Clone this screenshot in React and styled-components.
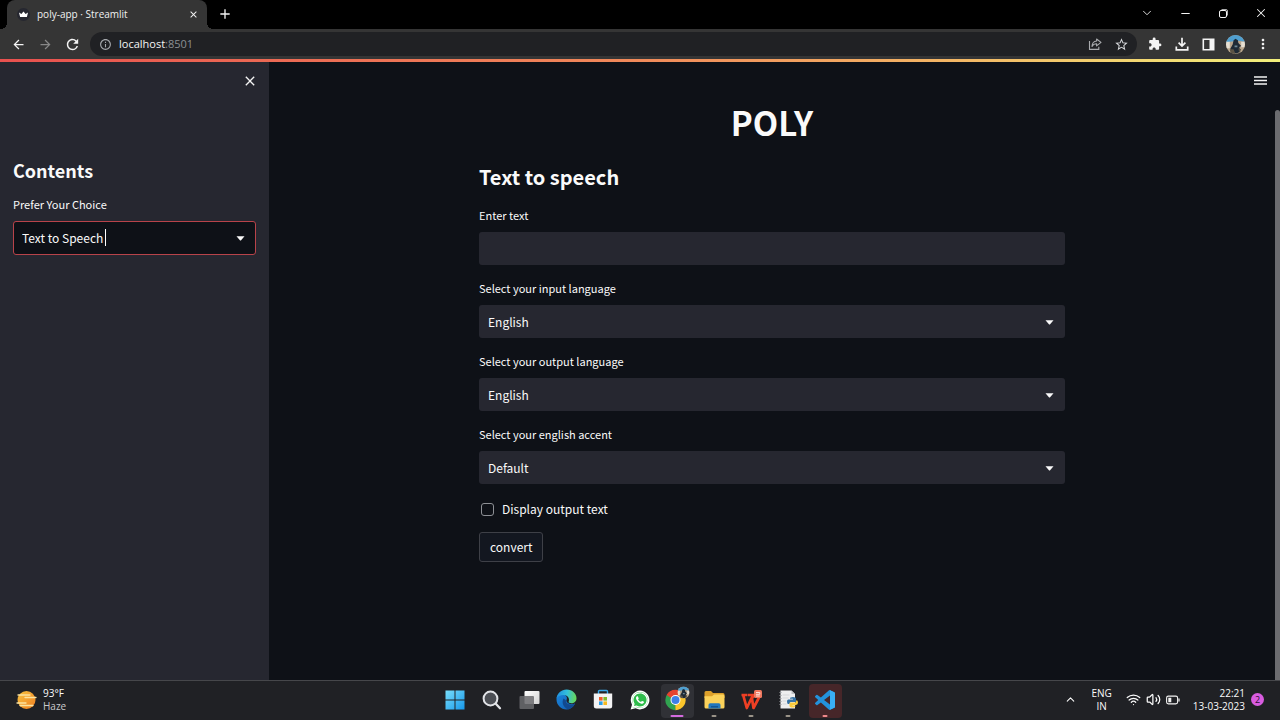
import React from "react";
import styled, { createGlobalStyle } from "styled-components";
import {
  MdArrowBack,
  MdArrowForward,
  MdRefresh,
  MdStarOutline,
  MdExtension,
  MdMoreVert,
  MdClose,
  MdAdd,
  MdInfoOutline,
} from "react-icons/md";
import { FaWhatsapp } from "react-icons/fa6";
import { ChevronDown, ChevronUp, Minus, X, Wifi, Volume2 } from "lucide-react";

const Global = createGlobalStyle`
  *, *::before, *::after { box-sizing: border-box; }
  body { margin: 0; background: #0e1117; color: #fafafa; }
  button, input, select { font: inherit; color: inherit; }
  h1, h2, p { margin: 0; }
`;

const uiFont = `"Open Sans", "Noto Sans", sans-serif`;
const pageFont = `"Noto Sans CJK JP", "Noto Sans", sans-serif`;

const Screen = styled.div`
  min-height: 100vh;
  display: flex;
  flex-direction: column;
`;

/* Browser chrome */

const TabStrip = styled.div`
  display: flex;
  height: 29px;
  padding-left: 7px;
  background: #000;
  font: 10px/14px ${uiFont};
`;

const Tab = styled.div`
  position: relative;
  display: flex;
  align-items: center;
  gap: 7px;
  width: 200px;
  padding: 0 8px 1px 10px;
  border-radius: 8px 8px 0 0;
  background: #353535;
  &::before,
  &::after {
    content: "";
    position: absolute;
    bottom: 0;
    width: 6px;
    height: 6px;
  }
  &::before {
    right: 100%;
    background: radial-gradient(circle at 0 0, #000 6px, #353535 6px);
  }
  &::after {
    left: 100%;
    background: radial-gradient(circle at 100% 0, #000 6px, #353535 6px);
  }
`;

const TabTitle = styled.span`
  flex: 1;
  color: #f1f1f1;
`;

const IconButton = styled.button`
  display: grid;
  place-items: center;
  flex: none;
  width: ${(p) => p.$width || 27}px;
  height: ${(p) => p.$height || 24}px;
  padding: 0;
  border: 0;
  background: none;
  color: ${(p) => p.$color || "#f4f4f4"};
  svg { display: block; }
`;

const WindowControls = styled.div`
  display: flex;
  margin-left: auto;
`;

const Toolbar = styled.div`
  display: flex;
  align-items: center;
  height: 30px;
  padding: 0 4px 0 5px;
  background: #353535;
`;

const AddressBar = styled.div`
  flex: 1;
  display: flex;
  align-items: center;
  height: 24px;
  margin: 0 4px;
  padding: 0 2px 0 9px;
  border-radius: 12px;
  background: #202124;
  font: 11px/24px ${uiFont};
`;

const Address = styled.span`
  flex: 1;
  padding-left: 7px;
  color: #f5f5f5;
`;

const Port = styled.span`
  color: #8c9093;
`;

/* Streamlit page */

const Decoration = styled.div`
  height: 3px;
  background: linear-gradient(90deg, #e8514f, #f08a5a 50%, #f3b765 75%, #f2f07c);
`;

const Page = styled.div`
  flex: 1;
  display: flex;
  font: 12px/20px ${pageFont};
`;

const Sidebar = styled.aside`
  flex: none;
  width: 269px;
  padding: 7px 13px 24px;
  background: #262730;
`;

const SidebarTop = styled.div`
  display: flex;
  justify-content: flex-end;
  height: 91px;
  margin-right: -7px;
`;

const Main = styled.main`
  flex: 1;
  display: flex;
  justify-content: center;
  align-items: flex-start;
  position: relative;
  padding: 35px 24px 32px;
`;

const MenuSlot = styled.div`
  position: absolute;
  top: 6px;
  right: 1px;
`;

const Scrollbar = styled.div`
  flex: none;
  width: 5px;
  margin-top: 48px;
  border-radius: 3px 3px 0 0;
  background: #6b6c70;
`;

const Form = styled.form`
  flex: 1;
  max-width: 586px;
`;

const Title = styled.h1`
  font-size: 33px;
  font-weight: 700;
  line-height: 50px;
  text-align: center;
`;

const Heading = styled.h2`
  margin: ${(p) => (p.$side ? "0 0 16px" : "14px 0")};
  font-size: ${(p) => (p.$side ? 18 : 20)}px;
  font-weight: 700;
  line-height: ${(p) => (p.$side ? 20 : 32)}px;
`;

const Field = styled.div`
  display: flex;
  flex-direction: column;
  gap: 8px;
  margin-bottom: 15px;
`;

const Label = styled.label`
  font-size: 11px;
  line-height: 17px;
`;

const TextInput = styled.input`
  width: 100%;
  height: 33px;
  padding: 0 9px;
  border: 0;
  border-radius: 3px;
  background: #262730;
`;

const SelectBox = styled.div`
  position: relative;
  display: flex;
`;

const Select = styled.select`
  appearance: none;
  width: 100%;
  height: ${(p) => (p.$focused ? 34 : 33)}px;
  padding: 0 28px 0 ${(p) => (p.$focused ? 8 : 9)}px;
  border: ${(p) => (p.$focused ? "1px solid #b8434a" : "0")};
  border-radius: 3px;
  outline: 0;
  background: ${(p) => (p.$focused ? "#0e1117" : "#262730")};
`;

const SelectArrow = styled.svg`
  position: absolute;
  right: 11px;
  top: 15px;
  pointer-events: none;
`;

const TextCursor = styled.span`
  position: absolute;
  left: 92px;
  top: 8px;
  width: 1px;
  height: 17px;
  background: #fff;
`;

const CheckRow = styled.label`
  display: flex;
  align-items: center;
  gap: 8px;
  padding-left: 2px;
  margin: 0 0 13px;
  line-height: 20px;
`;

const Checkbox = styled.input`
  appearance: none;
  width: 13px;
  height: 13px;
  margin: 0;
  border: 1px solid #8d9095;
  border-radius: 3px;
`;

const Convert = styled.button`
  height: 30px;
  padding: 0 10px;
  border: 1px solid #3e4047;
  border-radius: 3px;
  background: #131720;
`;

/* Windows taskbar */

const Taskbar = styled.footer`
  display: grid;
  grid-template-columns: 1fr auto 1fr;
  align-items: center;
  height: 40px;
  border-top: 1px solid #46474b;
  background: #202125;
  font: 10px/13px ${uiFont};
`;

const Weather = styled.div`
  display: flex;
  align-items: center;
  gap: 6px;
  padding: 0 0 2px 16px;
`;

const Muted = styled.p`
  color: #c9c9cb;
`;

const Apps = styled.nav`
  display: flex;
  gap: 4px;
`;

const AppButton = styled.button`
  position: relative;
  display: grid;
  place-items: center;
  width: 33px;
  height: 34px;
  padding: 0 0 2px;
  border: 0;
  border-radius: 4px;
  background: ${(p) => p.$bg || "none"};
  &::after {
    content: "";
    position: absolute;
    bottom: 1px;
    left: 50%;
    translate: -50% 0;
    width: ${(p) => p.$barWidth || 0}px;
    height: 2px;
    border-radius: 1px;
    background: ${(p) => p.$bar || "#9b9489"};
  }
`;

const Tray = styled.div`
  display: flex;
  align-items: center;
  justify-content: flex-end;
  padding: 0 16px 2px 0;
`;

const Language = styled.div`
  margin: 0 14px;
  text-align: center;
`;

const Status = styled.div`
  display: flex;
  align-items: center;
  gap: 5px;
  margin-right: 13px;
`;

const Clock = styled.div`
  text-align: right;
`;

const Badge = styled.span`
  width: 13px;
  height: 13px;
  margin-left: 6px;
  border-radius: 50%;
  background: #d95ce0;
  color: #2a1030;
  font-size: 9px;
  line-height: 13px;
  text-align: center;
`;

function Crown() {
  return (
    <svg width="13" height="13" viewBox="0 0 13 13" aria-hidden="true">
      <circle cx="6.5" cy="6.5" r="6.5" fill="#262730" />
      <path d="M2 4.6 4.4 6 6.5 3.6 8.6 6 11 4.6 9.9 9H3.1z" fill="#fff" />
    </svg>
  );
}

function ShareIcon() {
  return (
    <svg width="14" height="14" viewBox="0 0 14 14" fill="none" stroke="currentColor" strokeWidth="1.1">
      <path d="M1.5 4v8.4h9.3V9.8" />
      <path d="M8.6 2 13 5.4 8.6 8.9V6.8C6.4 6.8 5 7.6 4 9.4 4.2 6.2 5.8 4.2 8.6 4z" strokeLinejoin="round" />
    </svg>
  );
}

function DownloadIcon() {
  return (
    <svg width="14" height="14" viewBox="0 0 14 14" fill="none" stroke="currentColor" strokeWidth="1.7">
      <path d="M7 .8v7.7M3.6 5.6 7 9l3.400-3.400M1.300 9.400v3.400h11.400V9.400" />
    </svg>
  );
}

function SidePanelIcon() {
  return (
    <svg width="13" height="13" viewBox="0 0 13 13">
      <path d="M1.300 1.300h10.400v10.400H1.300z" fill="none" stroke="currentColor" strokeWidth="1.600" />
      <path d="M7.500 1h4.500v11H7.500z" fill="currentColor" />
    </svg>
  );
}

function Portrait({ size = 19 }) {
  return (
    <svg width={size} height={size} viewBox="0 0 20 20">
      <defs>
        <clipPath id={`portrait${size}`}>
          <circle cx="10" cy="10" r="10" />
        </clipPath>
      </defs>
      <g clipPath={`url(#portrait${size})`}>
        <path d="M0 0h20v20H0z" fill="#b9a68d" />
        <path d="M0 0h20v7L13 6 4 7 0 8z" fill="#4f9fd0" />
        <path d="M0 7h4v7H0zM16 7h4v6h-4z" fill="#e6dfd2" />
        <path d="M8 5.500 10 4l2.500 1.500.5 3 3 3-2 1 1 5-4 2-5-1-1.500-4L7 10z" fill="#1e2a35" />
        <path d="M4 15h4l2 5H5zM13 14l3 1-2 4z" fill="#5b5344" />
        <path d="M9 11h3v2H9z" fill="#6d8794" />
      </g>
    </svg>
  );
}

function RestoreIcon() {
  return (
    <svg width="9" height="9" viewBox="0 0 9 9" fill="none" stroke="currentColor">
      <rect x=".5" y="1.500" width="7" height="7" rx="1.500" />
      <path d="M2.500.5H7A1.500 1.500 0 0 1 8.500 2v4.500" strokeOpacity=".7" />
    </svg>
  );
}

function MenuIcon() {
  return (
    <svg width="13" height="9" viewBox="0 0 13 9">
      <path d="M0 1h13M0 4.500h13M0 8h13" stroke="currentColor" strokeWidth="1.600" />
    </svg>
  );
}

function HazeIcon() {
  return (
    <svg width="21" height="20" viewBox="0 0 21 20">
      <defs>
        <linearGradient id="sun" x1="0" y1="0" x2="1" y2="1">
          <stop offset="0" stopColor="#f9c440" />
          <stop offset="1" stopColor="#ee7d21" />
        </linearGradient>
      </defs>
      <circle cx="10.500" cy="10" r="9" fill="url(#sun)" />
      <path
        d="M2 5h12M9 7.500h11M1 13h9M4 15.500h13"
        stroke="#fbe3a0"
        strokeWidth="1.300"
        strokeLinecap="round"
      />
    </svg>
  );
}

function WindowsIcon() {
  return (
    <svg width="20" height="20" viewBox="0 0 20 20">
      <defs>
        <linearGradient id="win" x1="0" y1="0" x2="20" y2="20" gradientUnits="userSpaceOnUse">
          <stop offset="0" stopColor="#7be0fb" />
          <stop offset="1" stopColor="#1496ea" />
        </linearGradient>
      </defs>
      <path d="M.5.5h9v9h-9zM10.500.5h9v9h-9zM.5 10.500h9v9h-9zM10.500 10.500h9v9h-9z" fill="url(#win)" />
    </svg>
  );
}

function SearchIcon() {
  return (
    <svg width="20" height="20" viewBox="0 0 20 20">
      <circle cx="8.500" cy="8.500" r="6.900" fill="#4c4f55" stroke="#e2e4e8" strokeWidth="2" />
      <path d="m13.800 13.800 4.200 4.400" stroke="#e2e4e8" strokeWidth="2.300" strokeLinecap="round" />
    </svg>
  );
}

function TaskViewIcon() {
  return (
    <svg width="21" height="20" viewBox="0 0 21 20">
      <defs>
        <linearGradient id="view" x1="0" y1="0" x2="1" y2="1">
          <stop offset="0" stopColor="#fff" />
          <stop offset="1" stopColor="#d2d2d2" />
        </linearGradient>
      </defs>
      <rect x="5.500" y="1" width="15" height="13" rx="1" fill="url(#view)" />
      <rect x=".5" y="6" width="14.500" height="13" rx="1" fill="#6b6b6e" fillOpacity=".85" />
    </svg>
  );
}

function EdgeIcon() {
  return (
    <svg width="21" height="21" viewBox="0 0 21 21">
      <defs>
        <linearGradient id="edgeTop" x1="0" y1=".4" x2="1" y2=".5">
          <stop offset="0" stopColor="#1f8fe0" />
          <stop offset=".5" stopColor="#33c0dc" />
          <stop offset="1" stopColor="#6ad854" />
        </linearGradient>
        <linearGradient id="edgeBody" x1="0" y1="0" x2="1" y2="1">
          <stop offset="0" stopColor="#1b86dc" />
          <stop offset="1" stopColor="#0f5bb0" />
        </linearGradient>
      </defs>
      <path d="M.500 10.500C.500 5 4 3.500 8 5.500c3 1.300 3.500 3.500 2.500 5.500-.600 3 3.500 5 8.600 3.500C17 18.500 14 20.500 10.500 20.500 5 20.500.5 16 .5 10.500z" fill="url(#edgeBody)" />
      <path d="M7.500 9.500C5.500 13 7 18.500 12 20.300 14.800 20 17.500 18 19.100 14.500 14 17 9 14.500 10 11.500z" fill="#12498f" />
      <path d="M.6 9.500C1.200 4 5.400.5 10.500.5c6 0 10 4.200 10 8.700 0 3.500-2.600 5-5 5-2 0-3.300-.8-2.800-1.700C13.800 10.500 12.500 6 7.500 6 4 6 1.500 7.500.6 9.500z" fill="url(#edgeTop)" />
    </svg>
  );
}

function StoreIcon() {
  return (
    <svg width="20" height="21" viewBox="0 0 20 21">
      <path d="M5.500 5V2.500q0-1 1-1h7q1 0 1 1V5" fill="none" stroke="#38a7e8" strokeWidth="1.400" />
      <path d="M.8 4.500h18.400V17q0 2.500-2.500 2.500H3.300Q.8 19.500.8 17z" fill="#f3f3f4" />
      <path d="M6 8h3.600v3.600H6z" fill="#ee5a2b" />
      <path d="M10.400 8H14v3.600h-3.600z" fill="#7eba2d" />
      <path d="M6 12.400h3.600V16H6z" fill="#2b9fe8" />
      <path d="M10.400 12.400H14V16h-3.600z" fill="#f8b91f" />
    </svg>
  );
}

function WhatsAppIcon() {
  return (
    <svg width="20" height="20" viewBox="0 0 20 20">
      <path d="M10 .6A9.400 9.400 0 1 1 5.600 18.300L.6 19.600 2 14.700A9.400 9.400 0 0 1 10 .6z" fill="#fff" />
      <path d="M10 2A8 8 0 1 1 6 17l-3.500.8 1-3.400A8 8 0 0 1 10 2z" fill="#2ebd4b" />
      <FaWhatsapp x="1" y="1" size={18} fill="#fff" stroke="none" />
    </svg>
  );
}

function ChromeIcon() {
  return (
    <svg width="25" height="27" viewBox="0 0 25 27">
      <path d="M10.500 14 1.700 8.900A10.200 10.200 0 0 1 19.300 8.900z" fill="#e6432f" />
      <path d="M10.500 14 19.300 8.900A10.200 10.200 0 0 1 10.500 24.200z" fill="#fbc52b" />
      <path d="M10.500 14v10.200A10.200 10.200 0 0 1 1.700 8.900z" fill="#31a350" />
      <path d="M10.500 9.200h9L14.600 16.600l-4.100 7.600z" fill="#fbc52b" />
      <path d="m6.300 16.400-4.600-7.500 9 0 0 3z" fill="#31a350" />
      <path d="M1.700 8.900A10.200 10.200 0 0 1 19.300 9.200h-8.800L6.300 11.800 4.500 11z" fill="#e6432f" />
      <circle cx="10.500" cy="14" r="5" fill="#fff" />
      <circle cx="10.500" cy="14" r="4" fill="#3d7fe8" />
      <g transform="translate(12.500 .5)">
        <Portrait size={12} />
      </g>
    </svg>
  );
}

function FolderIcon() {
  return (
    <svg width="21" height="20" viewBox="0 0 21 20">
      <path d="M.5 2.500q0-1.500 1.500-1.500h5l2 2h10q1.500 0 1.500 1.500V8H.5z" fill="#dda02a" />
      <path d="M.5 6.200H8L10 4.500h9q1.500 0 1.500 1.500v11q0 1.500-1.500 1.500H2Q.5 18.500.5 17z" fill="#fbd25a" />
      <path d="M4.500 18.500V15q0-1.700 1.700-1.700h8.600q1.700 0 1.700 1.700v3.500z" fill="#2377bd" />
      <path d="M7 16.800h7" stroke="#124f87" strokeWidth="1.200" />
    </svg>
  );
}

function WpsIcon() {
  return (
    <svg width="22" height="22" viewBox="0 0 22 22">
      <path
        d="M1.500 6H7M3.200 6.200 6.800 19l5-10.500L13.500 19 19 8.500M7.500 6H14l-2.400 4"
        fill="none"
        stroke="#ee3f24"
        strokeWidth="2.700"
        strokeLinejoin="round"
      />
      <rect x="14" y="1" width="8" height="8" rx="1.500" fill="#f0785f" />
      <path d="M16 3.500h3.800v1.800H16M16 7h3.800" fill="none" stroke="#ffe2da" />
    </svg>
  );
}

function PythonFileIcon() {
  return (
    <svg width="20" height="21" viewBox="0 0 20 21">
      <path d="M2.500 1.500h11L17 5v14.500H2.500z" fill="#eeeeef" />
      <path d="M13.500 1.500V5H17" fill="#bfc1c4" />
      <path d="M4.500 6h7M4.500 9h6M4.500 12h4M4.500 15h4" stroke="#d5d6d9" />
      <path d="M1.500 3.500h2M1.500 6.500h2M1.500 9.500h2M1.500 12.500h2M1.500 15.500h2" stroke="#9a9ca0" />
      <path d="M12 9.500q0-1.500 3-1.500t3 1.800V13h-5q-1.500 0-1.500 2H10.200Q9 15 9 12.500T11 10.500h4v-.7h-3z" fill="#3672a4" />
      <path d="M17.500 16.500q0 2-3 2t-3-2V14.600q0-1 1.300-1H17q1.300 0 1.300-2.400 1.700 0 1.700 2.300T18 16h-3.500v.5z" fill="#fbcb3b" />
    </svg>
  );
}

function CodeIcon() {
  return (
    <svg width="20" height="20" viewBox="0 0 24 24">
      <path
        d="M23.150 2.587 18.210.21a1.494 1.494 0 0 0-1.705.29l-9.460 8.630-4.120-3.128a.999.999 0 0 0-1.276.057L.327 7.261A1 1 0 0 0 .326 8.740L3.899 12 .326 15.260a1 1 0 0 0 .001 1.479L1.650 17.940a.999.999 0 0 0 1.276.057l4.120-3.128 9.460 8.630a1.492 1.492 0 0 0 1.704.290l4.942-2.377A1.500 1.500 0 0 0 24 20.060V3.939a1.500 1.500 0 0 0-.850-1.352zm-5.146 14.861L10.826 12l7.178-5.448v10.896z"
        fill="#2392dc"
      />
      <path d="m18 .2 5.200 2.400q.8.400.8 1.400v16q0 1-.8 1.400L18 23.800z" fill="#39aef5" />
    </svg>
  );
}

function BatteryIcon() {
  return (
    <svg width="14" height="10" viewBox="0 0 14 10">
      <rect x=".6" y="1.100" width="11" height="7.800" rx="1.800" fill="none" stroke="#f2f2f2" strokeWidth="1.100" />
      <path d="M2.300 2.800h3v4.400h-3zM12.400 3.500h1.200v3h-1.200z" fill="#f2f2f2" />
    </svg>
  );
}

const fields = [
  { id: "input-language", label: "Select your input language", value: "English" },
  { id: "output-language", label: "Select your output language", value: "English" },
  { id: "accent", label: "Select your english accent", value: "Default" },
];

const apps = [
  { name: "Start", Icon: WindowsIcon },
  { name: "Search", Icon: SearchIcon },
  { name: "Task view", Icon: TaskViewIcon },
  { name: "Edge", Icon: EdgeIcon },
  { name: "Store", Icon: StoreIcon },
  { name: "WhatsApp", Icon: WhatsAppIcon },
  { name: "Chrome", Icon: ChromeIcon, bg: "#303136", bar: "#d46be0", barWidth: 13 },
  { name: "File Explorer", Icon: FolderIcon, barWidth: 5 },
  { name: "WPS Office", Icon: WpsIcon, barWidth: 5 },
  { name: "Python file", Icon: PythonFileIcon, barWidth: 5 },
  { name: "Visual Studio Code", Icon: CodeIcon, bg: "#462629", bar: "#f08a8c", barWidth: 5 },
];

function Dropdown({ id, value, focused }) {
  return (
    <SelectBox>
      <Select id={id} defaultValue={value} $focused={focused}>
        <option>{value}</option>
      </Select>
      {focused && <TextCursor />}
      <SelectArrow width="9" height="5" viewBox="0 0 9 5" aria-hidden="true">
        <path d="M.5.3h8L4.900 4.400q-.4.400-.8 0z" fill="#fafafa" />
      </SelectArrow>
    </SelectBox>
  );
}

export default function App() {
  return (
    <Screen>
      <Global />
      <TabStrip>
        <Tab>
          <Crown />
          <TabTitle>poly-app · Streamlit</TabTitle>
          <IconButton $width={12} aria-label="Close tab">
            <MdClose size={11} />
          </IconButton>
        </Tab>
        <IconButton $width={36} $height={28} aria-label="New tab">
          <MdAdd size={16} />
        </IconButton>
        <WindowControls>
          <IconButton $width={38} $height={26} aria-label="Search tabs">
            <ChevronDown size={14} strokeWidth={1.5} />
          </IconButton>
          <IconButton $width={38} $height={26} aria-label="Minimize">
            <Minus size={13} strokeWidth={2} />
          </IconButton>
          <IconButton $width={38} $height={26} aria-label="Restore">
            <RestoreIcon />
          </IconButton>
          <IconButton $width={38} $height={26} aria-label="Close window">
            <X size={14} strokeWidth={1.75} />
          </IconButton>
        </WindowControls>
      </TabStrip>
      <Toolbar>
        <IconButton aria-label="Back">
          <MdArrowBack size={15} />
        </IconButton>
        <IconButton $color="#888" aria-label="Forward">
          <MdArrowForward size={15} />
        </IconButton>
        <IconButton aria-label="Reload">
          <MdRefresh size={17} />
        </IconButton>
        <AddressBar>
          <MdInfoOutline size={13} color="#a5a8ac" />
          <Address>
            localhost<Port>:8501</Port>
          </Address>
          <IconButton $color="#a9abae" aria-label="Share">
            <ShareIcon />
          </IconButton>
          <IconButton $color="#d7d9dc" aria-label="Bookmark">
            <MdStarOutline size={15} />
          </IconButton>
        </AddressBar>
        <IconButton aria-label="Extensions">
          <MdExtension size={14} />
        </IconButton>
        <IconButton aria-label="Downloads">
          <DownloadIcon />
        </IconButton>
        <IconButton aria-label="Side panel">
          <SidePanelIcon />
        </IconButton>
        <IconButton aria-label="Profile">
          <Portrait />
        </IconButton>
        <IconButton aria-label="More">
          <MdMoreVert size={16} />
        </IconButton>
      </Toolbar>
      <Decoration />
      <Page>
        <Sidebar>
          <SidebarTop>
            <IconButton aria-label="Close sidebar">
              <MdClose size={16} />
            </IconButton>
          </SidebarTop>
          <Heading $side>Contents</Heading>
          <Field>
            <Label htmlFor="choice">Prefer Your Choice</Label>
            <Dropdown id="choice" value="Text to Speech" focused />
          </Field>
        </Sidebar>
        <Main>
          <Form onSubmit={(e) => e.preventDefault()}>
            <Title>POLY</Title>
            <Heading>Text to speech</Heading>
            <Field>
              <Label htmlFor="text">Enter text</Label>
              <TextInput id="text" type="text" />
            </Field>
            {fields.map((f) => (
              <Field key={f.id}>
                <Label htmlFor={f.id}>{f.label}</Label>
                <Dropdown id={f.id} value={f.value} />
              </Field>
            ))}
            <CheckRow>
              <Checkbox type="checkbox" />
              Display output text
            </CheckRow>
            <Convert type="submit">convert</Convert>
          </Form>
          <MenuSlot>
            <IconButton aria-label="Menu">
              <MenuIcon />
            </IconButton>
          </MenuSlot>
        </Main>
        <Scrollbar />
      </Page>
      <Taskbar>
        <Weather>
          <HazeIcon />
          <div>
            <p>93°F</p>
            <Muted>Haze</Muted>
          </div>
        </Weather>
        <Apps>
          {apps.map(({ name, Icon, bg, bar, barWidth }) => (
            <AppButton key={name} aria-label={name} $bg={bg} $bar={bar} $barWidth={barWidth}>
              <Icon />
            </AppButton>
          ))}
        </Apps>
        <Tray>
          <ChevronUp size={13} />
          <Language>
            <p>ENG</p>
            <p>IN</p>
          </Language>
          <Status>
            <Wifi size={15} />
            <Volume2 size={15} />
            <BatteryIcon />
          </Status>
          <Clock>
            <p>22:21</p>
            <p>13-03-2023</p>
          </Clock>
          <Badge>2</Badge>
        </Tray>
      </Taskbar>
    </Screen>
  );
}
